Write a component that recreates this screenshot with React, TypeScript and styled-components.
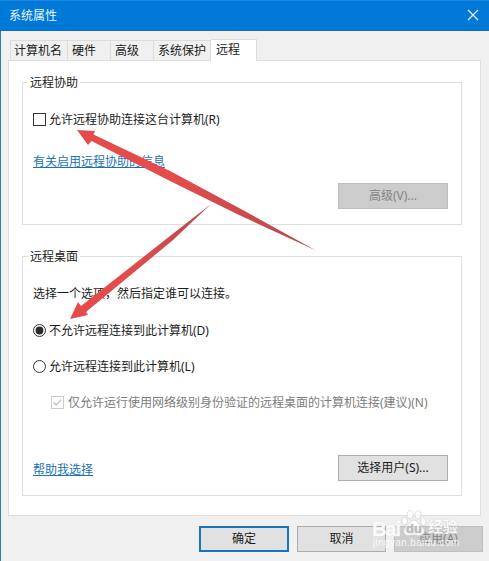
import React from "react";
import styled, { createGlobalStyle, css } from "styled-components";

const GlobalStyle = createGlobalStyle`
  * { box-sizing: border-box; }
  body {
    margin: 0;
    overflow: hidden;
    font: 12px/16px "Noto Sans", "Noto Sans CJK SC", sans-serif;
    color: #1c1c1c;
  }
`;

const Dialog = styled.div`
  position: relative;
  display: flex;
  flex-direction: column;
  width: 489px;
  height: 561px;
  background: #f0f0f0;
  border-left: 1px solid #2f7f9f;
`;

const TitleBar = styled.header`
  display: flex;
  justify-content: space-between;
  align-items: center;
  height: 31px;
  margin-left: -1px;
  padding: 1px 10px 0 9px;
  background: #0078d7;
  border-top: 1px solid #1a86dc;
  border-bottom: 1px solid #0c70b8;
  color: #e6f7ff;
`;

const CloseButton = styled.button`
  display: flex;
  padding: 0 0 2px;
  border: 0;
  background: none;
`;

const Tabs = styled.nav`
  display: flex;
  align-items: flex-end;
  height: 30px;
  padding-left: 9px;
  margin-bottom: -1px;
  z-index: 1;
`;

const Tab = styled.button<{ $width: number; $indent: number; $active?: boolean }>`
  width: ${(p) => p.$width}px;
  height: 20px;
  margin-bottom: 1px;
  padding: 1px 0 0 ${(p) => p.$indent}px;
  border: 1px solid #dcdcdc;
  border-left-width: 0;
  border-bottom: 0;
  background: #f0f0f0;
  color: inherit;
  font: inherit;
  text-align: left;
  white-space: nowrap;
  &:first-child { border-left-width: 1px; }
  ${(p) => p.$active && css`
    height: 22px;
    margin-bottom: 0;
    padding-top: 0;
    padding-bottom: 2px;
    background: #fff;
  `}
`;

const Panel = styled.main`
  width: 473px;
  height: 456px;
  margin-left: 7px;
  padding: 21px 18px 0 13px;
  background: #fff;
  border: 1px solid #dfdfdf;
`;

const Group = styled.section<{ $height: number }>`
  display: flex;
  flex-direction: column;
  align-items: flex-start;
  width: 440px;
  height: ${(p) => p.$height}px;
  padding: 0 13px 15px 10px;
  border: 1px solid #dedede;
  & + & {
    margin-top: 31px;
    padding-bottom: 14px;
  }
`;

const GroupTitle = styled.h2`
  margin: -8px 0 0 -5px;
  padding: 0 2px;
  background: #fff;
  font: inherit;
`;

const Option = styled.label<{ $top: number; $indent?: number; $disabled?: boolean }>`
  display: flex;
  align-items: center;
  gap: ${(p) => (p.$disabled ? 4 : 3)}px;
  margin: ${(p) => p.$top}px 0 0 ${(p) => p.$indent ?? 0}px;
  color: ${(p) => (p.$disabled ? "#7c7c7c" : "inherit")};
  white-space: nowrap;
`;

const Mark = styled.svg`
  flex: none;
  width: 13px;
  height: 13px;
  margin-bottom: 1px;
`;

const Hint = styled.p`
  margin: 21px 0 0;
`;

const Link = styled.a`
  color: #1a72b5;
  text-decoration: underline;
  text-underline-offset: 1px;
  text-decoration-skip-ink: none;
`;

const AssistLink = styled(Link)`
  margin-top: 26px;
`;

const GroupFooter = styled.div`
  display: flex;
  justify-content: space-between;
  align-items: center;
  width: 100%;
  margin-top: auto;
  ${Link} { padding-top: 4px; }
`;

const Button = styled.button<{ $width?: number; $kind?: "default" | "disabled" }>`
  width: ${(p) => p.$width ?? 110}px;
  height: 26px;
  margin-left: auto;
  padding: 0;
  border: 1px solid #adadad;
  background: #e1e1e1;
  color: #1c1c1c;
  font: inherit;
  ${(p) => p.$kind === "default" && css`border: 2px solid #1976bc;`}
  ${(p) => p.$kind === "disabled" && css`
    background: #ccc;
    border-color: #bfbfbf;
    color: #858585;
  `}
`;

const Footer = styled.footer`
  display: flex;
  justify-content: flex-end;
  gap: 8px;
  padding: 10px 6px 0 0;
  ${Button} { margin-left: 0; }
`;

const Arrows = styled.svg`
  position: absolute;
  left: -1px;
  top: 0;
  pointer-events: none;
`;

const Watermark = styled.div`
  position: absolute;
  left: 371px;
  top: 505px;
  width: 92px;
  height: 48px;
  color: #fff;
  opacity: 0.85;
  pointer-events: none;
`;

const BrandRow = styled.div`
  display: flex;
  align-items: flex-end;
  height: 32px;
  font: 700 20px/20px "Liberation Sans", "Noto Sans CJK SC", sans-serif;
  text-shadow: 0 0 1px #a8a8a8;
`;

const BrandLatin = styled.span`
  width: 29px;
  margin-bottom: -2px;
  letter-spacing: -1px;
  -webkit-text-stroke: 0.5px #fff;
`;

const BrandChinese = styled.span`
  margin-left: 1px;
  font-size: 15px;
  letter-spacing: -0.3px;
  white-space: nowrap;
`;

const BrandUrl = styled.div`
  padding-left: 1px;
  font: 10px/12px "Liberation Sans", sans-serif;
  letter-spacing: 0.35px;
  white-space: nowrap;
`;

function CheckBox({ disabled }: { disabled?: boolean }) {
  return (
    <Mark viewBox="0 0 13 13">
      <rect x=".5" y=".5" width="12" height="12" fill="#fff" stroke={disabled ? "#ccc" : "#333"} />
      {disabled && <path d="M2.7 6.5 5.2 9 10.3 3.6" fill="none" stroke="#bdbdbd" strokeWidth="1.2" />}
    </Mark>
  );
}

function Radio({ selected }: { selected?: boolean }) {
  return (
    <Mark viewBox="0 0 13 13">
      <circle cx="6.5" cy="6.5" r="6" fill="#fff" stroke="#333" />
      {selected && <circle cx="6.5" cy="6.5" r="3.9" fill="#2b2b2b" />}
    </Mark>
  );
}

function Paw() {
  return (
    <svg width="26" height="28" viewBox="0 0 26 28" fill="#fff" stroke="#c4c4c4" strokeWidth=".6">
      <ellipse cx="3.6" cy="12" rx="2.8" ry="4" />
      <ellipse cx="9.2" cy="5.6" rx="3" ry="4.2" />
      <ellipse cx="17" cy="5.8" rx="3" ry="4.2" transform="rotate(10 17 6)" />
      <ellipse cx="22.4" cy="12.6" rx="2.8" ry="4" />
      <path d="M13 11c3 0 4.2 3.2 6.6 5.2 2.7 2.3 4.4 4.2 3.5 7.2-.9 3.2-3.6 3.6-6 3.1-2.8-.5-5.4-.5-8.2 0-2.4.5-5.1.1-6-3.1-.9-3 .8-4.9 3.5-7.2C8.8 14.200 10 11 13 11Z" />
      <text x="13" y="24" textAnchor="middle" fontFamily="Liberation Sans" fontWeight="700" fontSize="13" fill="#bcbcbc" stroke="none">du</text>
    </svg>
  );
}

const tabs = [
  { label: "计算机名", width: 58, indent: 3 },
  { label: "硬件", width: 43, indent: 4 },
  { label: "高级", width: 43, indent: 4 },
  { label: "系统保护", width: 57, indent: 4 },
  { label: "远程", width: 46, indent: 5, active: true },
];

export default function App() {
  return (
    <>
      <GlobalStyle />
      <Dialog>
        <TitleBar>
          <span>系统属性</span>
          <CloseButton aria-label="关闭">
            <svg width="12" height="12" viewBox="0 0 12 12" fill="none" stroke="#e9f8ff" strokeWidth="1.2">
              <path d="m1 1 10 10M11 1 1 11" />
            </svg>
          </CloseButton>
        </TitleBar>
        <Tabs>
          {tabs.map((t) => (
            <Tab key={t.label} $width={t.width} $indent={t.indent} $active={t.active}>{t.label}</Tab>
          ))}
        </Tabs>
        <Panel>
          <Group $height={143}>
            <GroupTitle>远程协助</GroupTitle>
            <Option $top={21}><CheckBox />允许远程协助连接这台计算机(R)</Option>
            <AssistLink>有关启用远程协助的信息</AssistLink>
            <GroupFooter><Button $kind="disabled">高级(V)...</Button></GroupFooter>
          </Group>
          <Group $height={240}>
            <GroupTitle>远程桌面</GroupTitle>
            <Hint>选择一个选项，然后指定谁可以连接。</Hint>
            <Option $top={21}><Radio selected />不允许远程连接到此计算机(D)</Option>
            <Option $top={20}><Radio />允许远程连接到此计算机(L)</Option>
            <Option $top={20} $indent={18} $disabled>
              <CheckBox disabled />仅允许运行使用网络级别身份验证的远程桌面的计算机连接(建议)(N)
            </Option>
            <GroupFooter><Link>帮助我选择</Link><Button>选择用户(S)...</Button></GroupFooter>
          </Group>
        </Panel>
        <Footer>
          <Button $width={90} $kind="default">确定</Button>
          <Button $width={89}>取消</Button>
          <Button $width={89} $kind="disabled">应用(A)</Button>
        </Footer>
        <Arrows width="489" height="561" viewBox="0 0 489 561">
          <defs>
            <linearGradient id="assist" gradientUnits="userSpaceOnUse" x1="78" y1="130" x2="316" y2="251">
              <stop offset=".4" stopColor="#e64b4b" /><stop offset="1" stopColor="#b04a50" />
            </linearGradient>
            <linearGradient id="desktop" gradientUnits="userSpaceOnUse" x1="70" y1="319" x2="211" y2="204">
              <stop offset=".4" stopColor="#e64b4b" /><stop offset="1" stopColor="#b04a50" />
            </linearGradient>
          </defs>
          <path d="M77 130 95 131 93.500 134.500 170 171 240 208.500 316 250.500 238 214.500 170 181 91.500 141 88 145Z" fill="url(#assist)" />
          <path d="M70 319 78 302 81 306 170 236 211 204 173 240 86 312 88 315Z" fill="url(#desktop)" />
        </Arrows>
        <Watermark>
          <BrandRow><BrandLatin>Bai</BrandLatin><Paw /><BrandChinese>经验</BrandChinese></BrandRow>
          <BrandUrl>jingyan.baidu.com</BrandUrl>
        </Watermark>
      </Dialog>
    </>
  );
}
